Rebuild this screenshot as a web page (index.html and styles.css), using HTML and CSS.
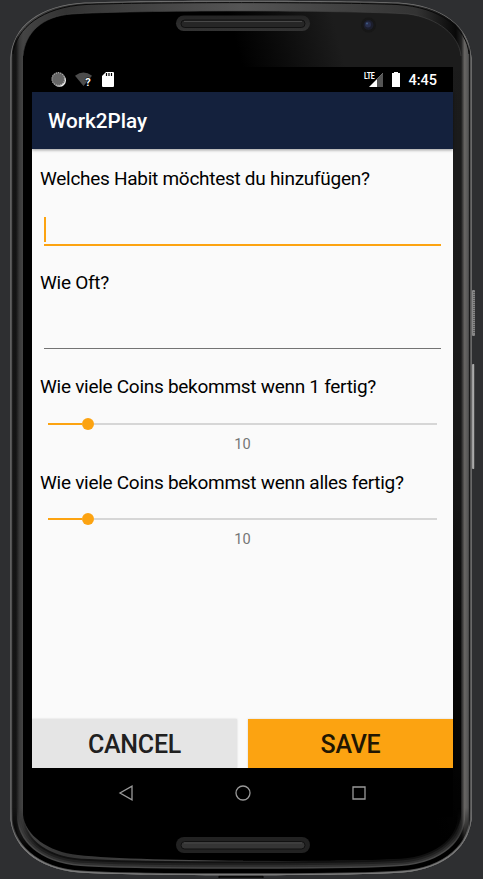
FILE: index.html
```html
<!DOCTYPE html>
<html lang="de">
<head>
<meta charset="utf-8">
<title>Work2Play</title>
<link rel="stylesheet" href="styles.css">
</head>
<body>
<main class="stage">
  <svg class="device" width="483" height="879" viewBox="0 0 483 879" aria-hidden="true">
    <defs>
      <linearGradient id="rim" x1="10" x2="472" y1="0" y2="0" gradientUnits="userSpaceOnUse">
        <stop offset="0" stop-color="#777"/><stop offset=".006" stop-color="#151515"/><stop offset=".013" stop-color="#141414"/><stop offset=".02" stop-color="#383838"/><stop offset=".028" stop-color="#444"/>
        <stop offset=".12" stop-color="#333"/><stop offset=".5" stop-color="#555"/><stop offset=".88" stop-color="#333"/>
        <stop offset=".965" stop-color="#080808"/><stop offset=".977" stop-color="#222"/><stop offset=".984" stop-color="#686664"/><stop offset=".992" stop-color="#555"/><stop offset=".995" stop-color="#111"/><stop offset="1" stop-color="#aaa"/>
      </linearGradient>
      <linearGradient id="glass" x1="243" x2="340" y1="70" y2="45" gradientUnits="userSpaceOnUse">
        <stop offset="0" stop-color="#000"/><stop offset=".45" stop-color="#0c0c0c"/><stop offset="1" stop-color="#1c1c1c"/>
      </linearGradient>
      <linearGradient id="fade" x1="0" x2="0" y1="0" y2="879" gradientUnits="userSpaceOnUse">
        <stop offset="0" stop-color="#000" stop-opacity="0"/><stop offset=".45" stop-color="#000" stop-opacity=".1"/><stop offset=".93" stop-color="#000" stop-opacity=".75"/><stop offset="1" stop-color="#000"/>
      </linearGradient>
      <linearGradient id="slot" x1="0" x2="0" y1="0" y2="1">
        <stop offset="0" stop-color="#242424"/><stop offset="1" stop-color="#333"/>
      </linearGradient>
      <linearGradient id="key" x1="0" x2="1" y1="0" y2="0">
        <stop offset="0" stop-color="#999"/><stop offset=".6" stop-color="#aaa"/><stop offset="1" stop-color="#555"/>
      </linearGradient>
      <linearGradient id="lowerFade" x1="0" x2="0" y1="808" y2="848" gradientUnits="userSpaceOnUse">
        <stop offset="0" stop-color="#000"/><stop offset="1" stop-color="#fff"/>
      </linearGradient>
      <mask id="lowerMask" maskUnits="userSpaceOnUse" x="0" y="780" width="483" height="99"><rect x="0" y="780" width="483" height="99" fill="url(#lowerFade)"/></mask>
      <path id="body" d="M10.500 58C12 26 40 5 85 2.500C145 0 338 0 398 2.500C442 5 470 26 471.500 58V820C468 850 440 872 394 873C345 876 138 876 88 873C42 872 14 850 10.500 820Z"/>
      <path id="lower" d="M10.500 780V820C14 850 42 872 88 873C138 876 345 876 394 873C440 872 468 850 471.500 820V780"/>
      <path id="inner" d="M23 56C25 33 42 16 72 14C130 10 350 10 408 14C438 18 459 35 461 56V816C458 840 434 857 405 859C345 862 140 862 78 855C48 852 25 835 23 815Z"/>
      <clipPath id="bodyClip"><use href="#body"/></clipPath>
      <clipPath id="innerClip"><use href="#inner"/></clipPath>
    </defs>
    <rect x="472" y="290" width="3" height="46" rx="1" fill="#888"/>
    <path d="M474 292v42" stroke="#333" stroke-width="1" stroke-dasharray="1 1"/>
    <rect x="472" y="364" width="2.600" height="105" rx="1" fill="url(#key)"/>
    <path d="M219 878v-2h44v2" fill="#111" stroke="#000"/>
    <use href="#body" fill="url(#rim)"/>
    <use href="#inner" fill="url(#glass)"/>
    <path d="M243 10H480V879H243Z" fill="url(#fade)" clip-path="url(#innerClip)"/>
    <path d="M23 56C25 33 42 16 72 14C130 10 350 10 408 14C438 18 459 35 461 56" fill="none" stroke="#444" stroke-width=".6"/>
    <g clip-path="url(#bodyClip)" fill="none">
      <g mask="url(#lowerMask)">
        <use href="#lower" stroke="#111" stroke-width="28"/>
        <use href="#lower" stroke="#202020" stroke-width="24"/>
        <use href="#lower" stroke="#303030" stroke-width="20"/>
        <use href="#lower" stroke="#484848" stroke-width="16"/>
        <use href="#lower" stroke="#000" stroke-width="13"/>
        <use href="#lower" stroke="#555" stroke-width="4"/>
        <use href="#lower" stroke="#888" stroke-width="2"/>
      </g>
      <path d="M13 54C16 28 42 7 86 4.500C145 2 338 2 397 4.500C440 7 467 28 469 54" stroke="#0a0a0a"/>
      <use href="#body" stroke="#777" stroke-width="1.600"/>
    </g>
    <g>
      <rect x="176" y="15.500" width="134" height="15.500" rx="7.750" fill="url(#slot)"/>
      <rect x="181" y="20" width="124" height="7.500" rx="3.750" fill="#262626" stroke="#111"/>
      <path d="M184 21.500H302" stroke="#484848"/>
      <rect x="176" y="837" width="134" height="16" rx="8" fill="#222"/>
      <rect x="181" y="841.500" width="124" height="7.500" rx="3.750" fill="#353535" stroke="#111"/>
      <path d="M184 843H302" stroke="#484848"/>
    </g>
    <circle cx="368.500" cy="25" r="7.500" fill="#171717"/>
    <circle cx="368.500" cy="25" r="5" fill="#1c1e2c"/>
    <circle cx="368" cy="24.500" r="3" fill="#292f4d"/>
    <circle cx="367" cy="23.500" r="1" fill="#3f5b85"/>
  </svg>

  <section class="screen">
    <header class="status">
      <svg class="status-left" width="66" height="17" viewBox="50 71 66 17" aria-hidden="true">
        <circle cx="59.500" cy="80.300" r="6.500" fill="#eee"/>
        <circle cx="58.300" cy="79" r="6.700" fill="#666"/>
        <circle cx="58.300" cy="79" r="6.300" fill="none" stroke="#aaa" stroke-width="1.200" stroke-dasharray="1.100 1.100"/>
        <path d="M75 75.700Q83.500 69.500 92 75.700L83.500 86Z" fill="#4c4c4c"/>
        <text class="wifi-mark" x="85.200" y="85.500">?</text>
        <path d="M106 72H113Q114 72 114 73V86Q114 87 113 87H103Q102 87 102 86V76Z" fill="#fff"/>
        <path d="M106.500 73v3M109 73v3M111.500 73v3" stroke="#000" stroke-width="1.200"/>
      </svg>
      <svg class="status-right" width="40" height="17" viewBox="362 71 40 17" aria-hidden="true">
        <path d="M383 73V87H369Z" fill="#fff"/>
        <path d="M377 79L383 73V87H377Z" fill="#555"/>
        <text class="lte" transform="translate(364 79) scale(.78 1)">LTE</text>
        <path d="M394 72h4v1h2v14h-8V73h2Z" fill="#fff"/>
      </svg>
      <span class="clock">4:45</span>
    </header>
    <div class="appbar"><h1>Work2Play</h1></div>
    <form class="form">
      <label class="question">Welches Habit möchtest du hinzufügen?</label>
      <div class="field focused"><i class="caret"></i></div>
      <label class="question">Wie Oft?</label>
      <div class="field"></div>
      <label class="question">Wie viele Coins bekommst wenn 1 fertig?</label>
      <div class="slider"><i class="filled"></i><i class="thumb"></i><i class="rest"></i></div>
      <output class="amount">10</output>
      <label class="question">Wie viele Coins bekommst wenn alles fertig?</label>
      <div class="slider"><i class="filled"></i><i class="thumb"></i><i class="rest"></i></div>
      <output class="amount">10</output>
    </form>
    <div class="actions">
      <button class="cancel" type="button">CANCEL</button>
      <button class="save" type="button">SAVE</button>
    </div>
    <nav class="navbar">
      <svg width="16" height="16" viewBox="0 0 16 16"><path d="M14 1.200V14.800L2 8Z"/></svg>
      <svg width="16" height="16" viewBox="0 0 16 16"><circle cx="8" cy="8" r="7"/></svg>
      <svg width="16" height="16" viewBox="0 0 16 16"><path d="M2 2H14V14H2Z"/></svg>
    </nav>
  </section>
</main>
</body>
</html>
```
FILE: styles.css
```css
* { box-sizing: border-box; }
body { margin: 0; background: #2e2f31; font-family: Roboto, sans-serif; }
.stage { position: relative; width: 483px; height: 879px; padding: 67px 30px 62px 32px; overflow: hidden; }
.device { position: absolute; left: 0; top: 0; }
.screen { position: relative; display: flex; flex-direction: column; width: 421px; height: 750px; background: #fafafa; }
.status { display: flex; align-items: center; height: 25px; padding: 0 16px 0 18px; background: #000; color: #fff; }
.status-right { margin-left: auto; }
.wifi-mark { font: 700 11px Roboto, sans-serif; fill: #fff; stroke: #000; stroke-width: 1px; paint-order: stroke; }
.lte { font: 700 9px Roboto, sans-serif; fill: #fff; letter-spacing: -.4px; }
.clock { margin-left: 6px; padding-top: 1px; font-size: 14.5px; font-weight: 500; line-height: 25px; }
.appbar { display: flex; align-items: center; height: 57px; padding-left: 16px; background: #14213d; box-shadow: 0 1px 3px rgba(0, 0, 0, .4); }
.appbar h1 { margin: 0; color: #fff; font-size: 20.7px; font-weight: 500; }
.form { display: flex; flex-direction: column; flex: 1; padding: 18px 8px 0; }
.question { height: 24px; color: #000; font-size: 19px; line-height: 24px; letter-spacing: -.28px; white-space: nowrap; }
.field { display: flex; height: 54px; margin: 0 4px 26px; padding: 26px 0 4px; border-bottom: 1px solid #737373; }
.field.focused { height: 55px; padding: 26px 0 2px; margin-bottom: 25px; border-bottom: 2px solid #fca311; }
.caret { width: 2px; height: 25px; background: #fca311; }
.slider { display: flex; align-items: center; height: 13px; margin: 18px 8px 0; }
.filled { width: 34px; height: 2px; background: #fca311; }
.thumb { width: 12px; height: 12px; border-radius: 50%; background: #fca311; }
.rest { flex: 1; height: 2px; background: #d6d6d6; }
.amount { height: 20px; margin: 3.5px 0 17px; color: #757575; font-size: 14.6px; line-height: 20px; text-align: center; }
.actions { display: grid; grid-template-columns: 1fr 1fr; gap: 11px; height: 49px; }
.actions button { border: 0; padding: 1px 0 0; font: 500 25px Roboto, sans-serif; letter-spacing: -.25px; }
.cancel { background: #e5e5e5; color: #202020; box-shadow: 0 0 2px rgba(0, 0, 0, .15); }
.save { background: #fca311; color: #211602; box-shadow: 0 0 2px rgba(0, 0, 0, .15); }
.navbar { position: relative; display: flex; align-items: center; justify-content: space-between; height: 49px; padding: 0 86px; background: #000; }
.navbar svg { fill: none; stroke: #999; stroke-width: 1.3; }
```
